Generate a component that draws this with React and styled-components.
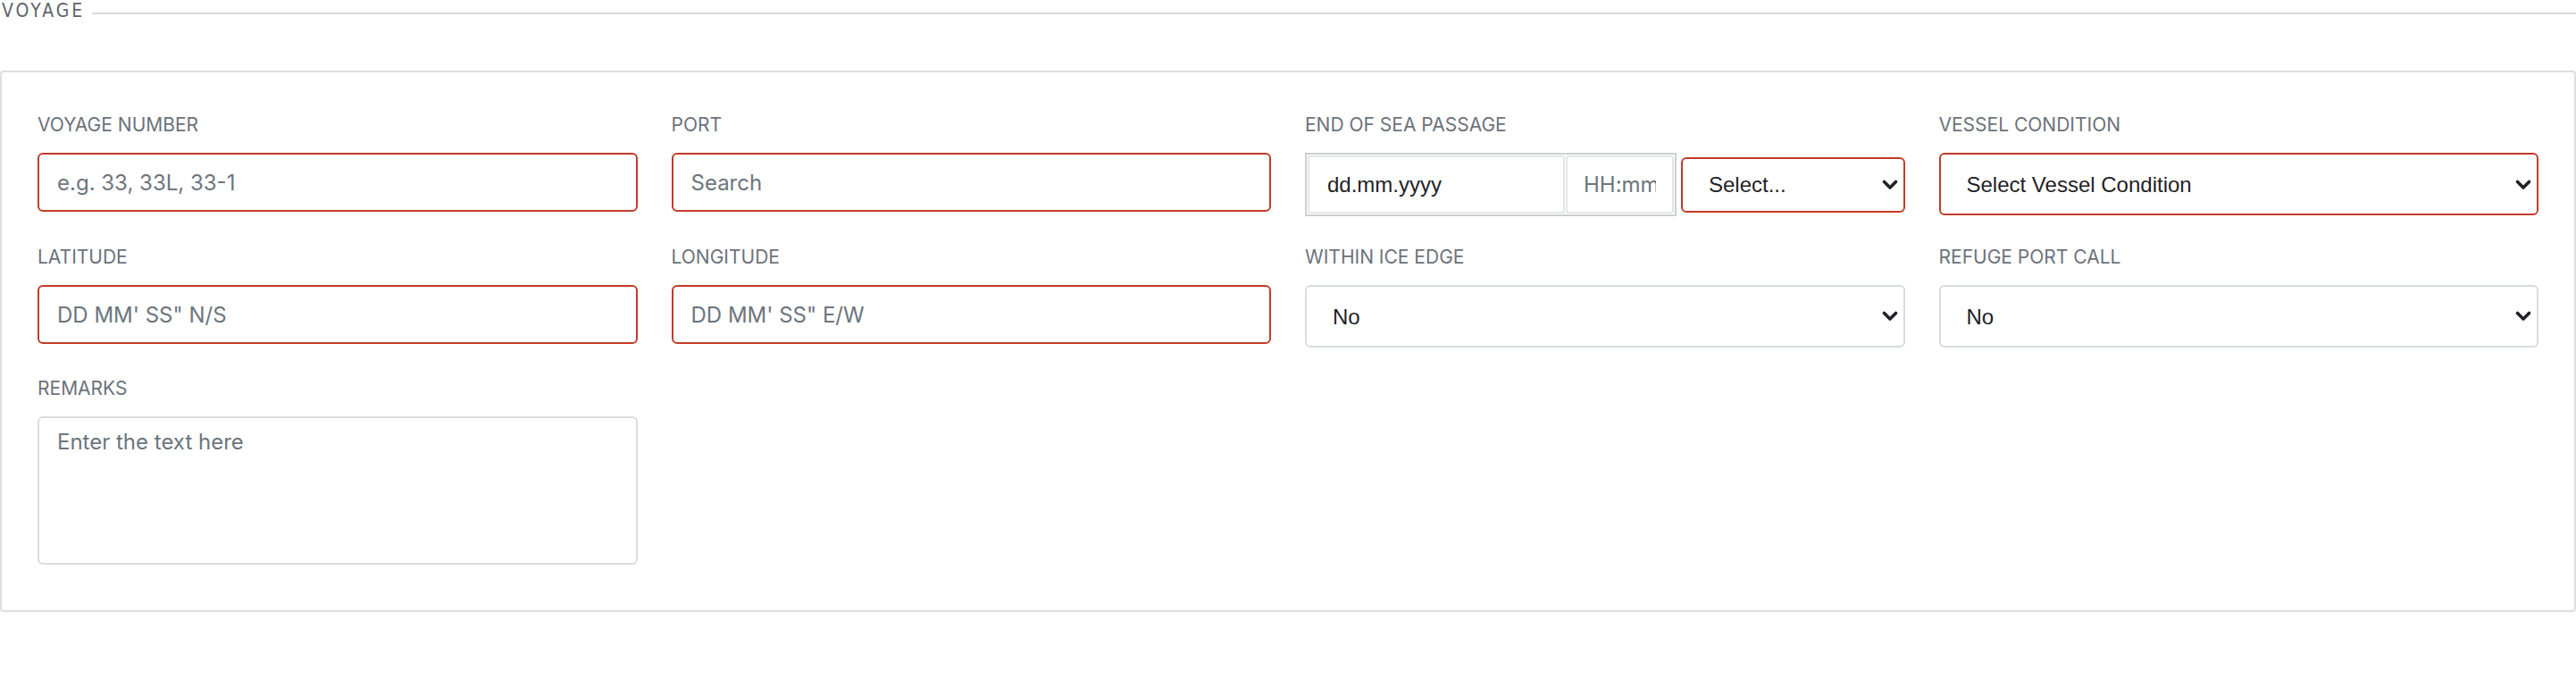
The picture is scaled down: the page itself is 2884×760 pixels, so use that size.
import React from "react";
import styled, { createGlobalStyle } from "styled-components";

const GlobalStyle = createGlobalStyle`
  body {
    margin: 0;
    background: #fff;
    font-family: "Inter", "Liberation Sans", sans-serif;
  }
  * {
    box-sizing: border-box;
  }
`;

const Chevron = () => (
  <svg width="18" height="12" viewBox="0 0 18 12" fill="none">
    <path
      d="M2.5 2.5 L9 9 L15.5 2.5"
      stroke="#1f2226"
      strokeWidth="3.6"
      strokeLinecap="round"
      strokeLinejoin="round"
    />
  </svg>
);

const SelectBox = ({ options, invalid, height }) => (
  <SelectWrap>
    <Select $invalid={invalid} $height={height} defaultValue={options[0]}>
      {options.map((o) => (
        <option key={o}>{o}</option>
      ))}
    </Select>
    <Arrow>
      <Chevron />
    </Arrow>
  </SelectWrap>
);

export default function App() {
  return (
    <Section>
      <GlobalStyle />
      <LegendRow>
        <LegendText>VOYAGE</LegendText>
        <LegendRule />
      </LegendRow>

      <Card>
        <Grid>
          <Field>
            <Label>Voyage Number</Label>
            <TextInput $invalid placeholder="e.g. 33, 33L, 33-1" />
          </Field>
          <Field>
            <Label>Port</Label>
            <TextInput $invalid placeholder="Search" />
          </Field>
          <Field>
            <Label>End of Sea Passage</Label>
            <DateRow>
              <DateGroup>
                <DateInput placeholder="dd.mm.yyyy" />
                <TimeInput placeholder="HH:mm" />
              </DateGroup>
              <SelectBox options={["Select..."]} invalid height={62} />
            </DateRow>
          </Field>
          <Field>
            <Label>Vessel Condition</Label>
            <SelectBox options={["Select Vessel Condition"]} invalid />
          </Field>

          <Field>
            <Label>Latitude</Label>
            <TextInput $invalid placeholder={`DD MM' SS" N/S`} />
          </Field>
          <Field>
            <Label>Longitude</Label>
            <TextInput $invalid placeholder={`DD MM' SS" E/W`} />
          </Field>
          <Field>
            <Label>Within Ice Edge</Label>
            <SelectBox options={["No", "Yes"]} />
          </Field>
          <Field>
            <Label>Refuge Port Call</Label>
            <SelectBox options={["No", "Yes"]} />
          </Field>

          <Field>
            <Label>Remarks</Label>
            <TextArea placeholder="Enter the text here" />
          </Field>
        </Grid>
      </Card>
    </Section>
  );
}

const Section = styled.section`
  width: 2884px;
`;

const LegendRow = styled.div`
  display: flex;
  align-items: flex-start;
  height: 20px;
`;

const LegendText = styled.span`
  padding-left: 2px;
  font-family: "Liberation Sans Narrow", "DejaVu Sans Condensed", "Roboto",
    sans-serif;
  font-size: 21px;
  line-height: 24px;
  letter-spacing: 3px;
  color: #5f646c;
`;

const LegendRule = styled.div`
  flex: 1;
  height: 2px;
  margin: 14px 0 0 8px;
  background: #d6d9dd;
`;

const Card = styled.div`
  margin-top: 59px;
  border: 2px solid #dcdfe3;
  border-radius: 4px;
  padding: 47px 40px 51px;
`;

const Grid = styled.div`
  display: grid;
  grid-template-columns: repeat(4, minmax(0, 1fr));
  column-gap: 38px;
  row-gap: 34px;
`;

const Field = styled.div`
  display: flex;
  flex-direction: column;
  min-width: 0;
`;

const Label = styled.label`
  margin-bottom: 19px;
  font-size: 21px;
  line-height: 24px;
  text-transform: uppercase;
  color: #6c727a;
`;

const TextInput = styled.input`
  height: 66px;
  padding: 0 20px;
  border: 2px solid ${(p) => (p.$invalid ? "#c23b26" : "#d8dbdf")};
  border-radius: 6px;
  font-family: "Inter", sans-serif;
  font-size: 24px;
  color: #212529;
  outline: none;

  &::placeholder {
    color: #6c757d;
  }
`;

const TextArea = styled.textarea`
  height: 166px;
  padding: 9px 20px;
  border: 2px solid #d8dbdf;
  border-radius: 6px;
  font-family: "Inter", sans-serif;
  font-size: 24px;
  line-height: 36px;
  color: #212529;
  resize: none;
  outline: none;

  &::placeholder {
    color: #6c757d;
  }
`;

const DateRow = styled.div`
  display: flex;
  align-items: center;
  gap: 5px;
  height: 71px;
`;

const DateGroup = styled.div`
  display: flex;
  gap: 1px;
  flex: 0 0 416px;
  min-width: 0;
  height: 71px;
  padding: 1px;
  border: 2px solid #cdcfd2;
  background: #fff;
`;

const DateInput = styled.input`
  flex: 1 1 0;
  width: 0;
  min-width: 0;
  padding: 0 20px;
  border: 2px solid #e3e5e8;
  border-radius: 3px;
  font-family: "Liberation Sans", sans-serif;
  font-size: 24px;
  outline: none;

  &::placeholder {
    color: #1f2226;
  }
`;

const TimeInput = styled(DateInput)`
  flex: 0 0 121px;
  padding: 0 18px;
  font-family: "Inter", sans-serif;

  &::placeholder {
    color: #6c757d;
  }
`;

const SelectWrap = styled.div`
  position: relative;
  flex: 1;
  min-width: 0;
`;

const Select = styled.select`
  appearance: none;
  width: 100%;
  height: ${(p) => p.$height || 70}px;
  padding: 0 50px 0 29px;
  border: 2px solid ${(p) => (p.$invalid ? "#c23b26" : "#d8dbdf")};
  border-radius: 6px;
  background: #fff;
  font-family: "Liberation Sans", sans-serif;
  font-size: 24px;
  color: #1f2226;
  outline: none;
`;

const Arrow = styled.span`
  position: absolute;
  top: 50%;
  right: 8px;
  display: flex;
  transform: translateY(-50%);
  pointer-events: none;
`;
